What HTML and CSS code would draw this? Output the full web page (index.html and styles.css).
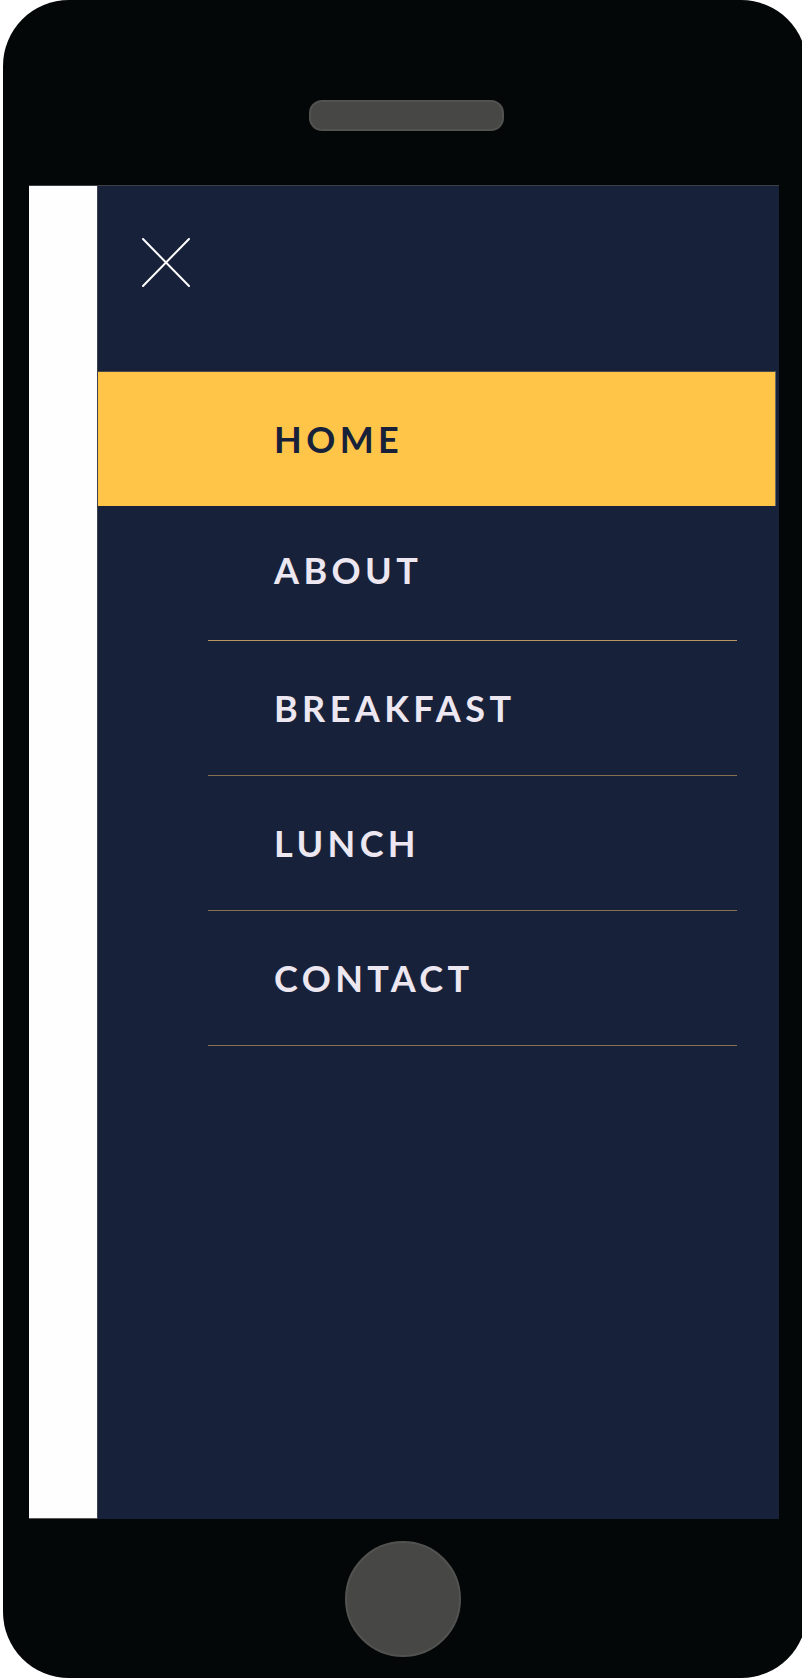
FILE: index.html
```html
<!DOCTYPE html>
<html lang="en">
<head>
<meta charset="utf-8">
<title>Menu</title>
<link rel="stylesheet" href="styles.css">
</head>
<body>
<div class="phone">
  <div class="phone-top">
    <div class="speaker"></div>
  </div>
  <div class="screen">
    <div class="page-edge"></div>
    <nav class="drawer">
      <div class="drawer-head">
        <svg class="close" width="48" height="49" viewBox="0 0 48 49" aria-label="Close">
          <path d="M1 1 L47 48 M47 1 L1 48" stroke="#ffffff" stroke-width="2" stroke-linecap="round" fill="none"/>
        </svg>
      </div>
      <ul class="menu">
        <li class="item active"><a class="link">HOME</a></li>
        <li class="item"><a class="link first">ABOUT</a></li>
        <li class="item"><a class="link">BREAKFAST</a></li>
        <li class="item"><a class="link">LUNCH</a></li>
        <li class="item"><a class="link">CONTACT</a></li>
      </ul>
    </nav>
  </div>
  <div class="phone-bottom">
    <div class="home-button"></div>
  </div>
</div>
</body>
</html>
```

FILE: styles.css
```css
html, body {
  margin: 0;
  padding: 0;
  background: #ffffff;
  overflow: hidden;
}

body {
  width: 802px;
  height: 1680px;
  font-family: Lato, "Noto Sans", sans-serif;
}

.phone {
  width: 804px;
  height: 1678px;
  margin-left: 3px;
  background: #040708;
  border-radius: 66px;
  display: flex;
  flex-direction: column;
}

.phone-top {
  height: 185px;
  box-sizing: border-box;
  padding-top: 100px;
  padding-left: 306px;
}

.speaker {
  width: 195px;
  height: 31px;
  box-sizing: border-box;
  background: #474745;
  border: 2px solid #525250;
  border-radius: 13px;
}

.screen {
  margin-left: 26px;
  width: 750px;
  height: 1334px;
  box-sizing: border-box;
  border-top: 1px solid #3d3f46;
  display: flex;
}

.page-edge {
  width: 68px;
  background: #fefefe;
  border-bottom: 1px solid #5a5a5a;
}

.drawer {
  flex: 1;
  background: #18213a;
  border-left: 1px solid #3e4250;
  display: flex;
  flex-direction: column;
}

.drawer-head {
  height: 185px;
  box-sizing: border-box;
  padding-top: 52px;
  padding-left: 44px;
}

.close {
  display: block;
}

.menu {
  list-style: none;
  margin: 0;
  padding: 0;
}

.item {
  height: 135px;
}

.item.active {
  background: #fec548;
  border-top: 1px solid #4a4a46;
  border-right: 1px solid #6b6b66;
  margin-right: 3px;
  height: 134px;
}

.link {
  display: flex;
  align-items: center;
  box-sizing: border-box;
  height: 100%;
  margin-left: 110px;
  width: 529px;
  padding-left: 66px;
  padding-bottom: 1px;
  border-bottom: 1px solid #85704f;
  font-size: 36px;
  font-weight: 700;
  line-height: 36px;
  letter-spacing: 4.4px;
  color: #ece7f0;
}

.link.first {
  border-bottom-color: #b8965c;
  padding-bottom: 6px;
}

.item.active .link {
  color: #18213a;
  border-bottom: none;
}

.phone-bottom {
  flex: 1;
  padding-top: 22px;
  padding-left: 342px;
}

.home-button {
  width: 116px;
  height: 116px;
  box-sizing: border-box;
  border-radius: 50%;
  background: #474745;
  border: 2px solid #525250;
}
```
